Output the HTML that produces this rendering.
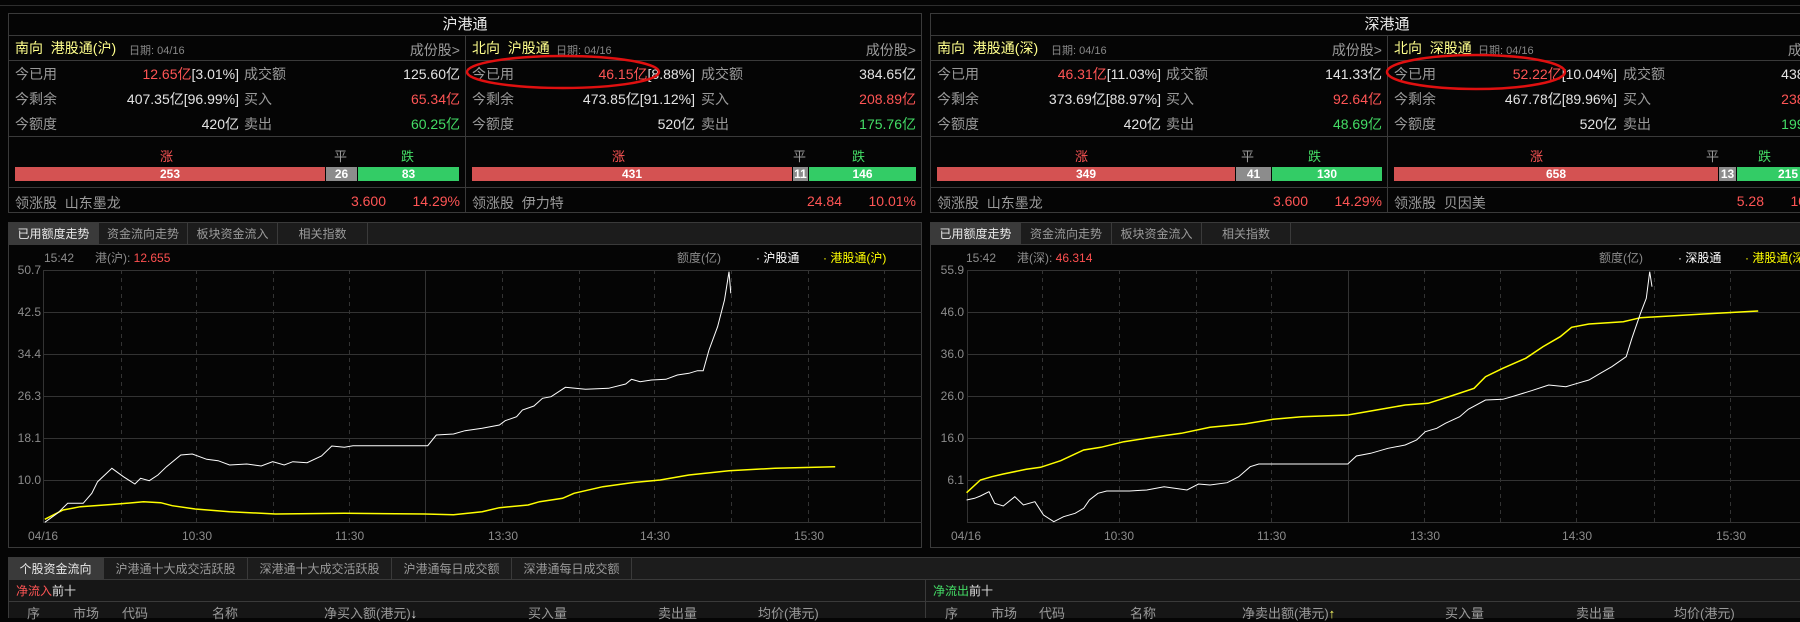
<!DOCTYPE html>
<html><head><meta charset="utf-8">
<style>
*{margin:0;padding:0;box-sizing:border-box}
body{width:1800px;height:618px;overflow:hidden;background:#050505;position:relative;font-family:"Liberation Sans","Noto Sans CJK SC",sans-serif;color:#a8a8a8;font-size:14px}
.a{position:absolute;white-space:nowrap}
.panel{position:absolute;top:13px;height:200px;width:914px;border:1px solid #3a3a3a}
.title{position:absolute;left:0;top:0;width:100%;height:22px;border-bottom:1px solid #3a3a3a;text-align:center;color:#e8e8e8;font-size:15px;line-height:22px}
.sub{position:absolute;top:22px;width:457px;height:177px}
.sub.r{border-left:1px solid #3a3a3a}
.hd{position:absolute;left:0;top:0;width:100%;height:25px;border-bottom:1px solid #3a3a3a}
.y{color:#ffff8c;font-size:14px;line-height:25px}
.dt{color:#888;font-size:11px}
.lb{color:#9a9a9a}
.w{color:#e4e4e4}
.rd{color:#ff5555}
.gr{color:#44dd66}
.line{position:absolute;left:0;width:100%;height:1px;background:#3a3a3a}
.bar{position:absolute;top:131px;height:14px;color:#fff;font-size:12px;font-weight:bold;text-align:center;line-height:14px}
.tabs{position:absolute;height:22px;background:#1c1c1c;border-bottom:1px solid #3a3a3a}
.tab{position:absolute;top:0;height:22px;line-height:22px;text-align:center;font-size:12px;color:#9a9a9a;border-right:1px solid #3a3a3a}
.tab.on{background:#3a3a3a;color:#e8e8e8}
</style></head><body>
<div class="a" style="left:0;top:5px;width:1800px;height:1px;background:#2e2e2e"></div>

<!-- LEFT PANEL 沪港通 -->
<div class="panel" style="left:8px">
 <div class="title">沪港通</div>
 <div class="sub" style="left:0">
  <div class="hd"><span class="a y" style="left:6px">南向&nbsp; 港股通(沪)</span><span class="a dt" style="left:120px;top:6px">日期: 04/16</span><span class="a lb" style="right:6px;top:4px">成份股&gt;</span></div>
  <span class="a lb" style="left:6px;top:28px">今已用</span><span class="a" style="right:227px;top:28px"><span class="rd">12.65亿</span><span class="w">[3.01%]</span></span><span class="a lb" style="left:235px;top:28px">成交额</span><span class="a w" style="right:6px;top:28px">125.60亿</span>
  <span class="a lb" style="left:6px;top:53px">今剩余</span><span class="a w" style="right:227px;top:53px">407.35亿[96.99%]</span><span class="a lb" style="left:235px;top:53px">买入</span><span class="a rd" style="right:6px;top:53px">65.34亿</span>
  <span class="a lb" style="left:6px;top:78px">今额度</span><span class="a w" style="right:227px;top:78px">420亿</span><span class="a lb" style="left:235px;top:78px">卖出</span><span class="a gr" style="right:6px;top:78px">60.25亿</span>
  <div class="line" style="top:100px"></div>
  <span class="a rd" style="left:151px;top:110px;font-size:13px">涨</span><span class="a lb" style="left:325px;top:110px;font-size:13px">平</span><span class="a gr" style="left:392px;top:110px;font-size:13px">跌</span>
  <div class="bar" style="left:6px;width:310px;background:#d45252">253</div>
  <div class="bar" style="left:317px;width:31px;background:#8c8c8c">26</div>
  <div class="bar" style="left:349px;width:101px;background:#33cc66">83</div>
  <div class="line" style="top:151px"></div>
  <span class="a lb" style="left:6px;top:157px">领涨股&nbsp; 山东墨龙</span><span class="a rd" style="right:80px;top:157px">3.600</span><span class="a rd" style="right:6px;top:157px">14.29%</span>
 </div>
 <div class="sub r" style="left:456px">
  <div class="hd"><span class="a y" style="left:6px">北向&nbsp; 沪股通</span><span class="a dt" style="left:90px;top:6px">日期: 04/16</span><span class="a lb" style="right:6px;top:4px">成份股&gt;</span></div>
  <span class="a lb" style="left:6px;top:28px">今已用</span><span class="a" style="right:227px;top:28px"><span class="rd">46.15亿</span><span class="w">[8.88%]</span></span><span class="a lb" style="left:235px;top:28px">成交额</span><span class="a w" style="right:6px;top:28px">384.65亿</span>
  <span class="a lb" style="left:6px;top:53px">今剩余</span><span class="a w" style="right:227px;top:53px">473.85亿[91.12%]</span><span class="a lb" style="left:235px;top:53px">买入</span><span class="a rd" style="right:6px;top:53px">208.89亿</span>
  <span class="a lb" style="left:6px;top:78px">今额度</span><span class="a w" style="right:227px;top:78px">520亿</span><span class="a lb" style="left:235px;top:78px">卖出</span><span class="a gr" style="right:6px;top:78px">175.76亿</span>
  <div class="line" style="top:100px"></div>
  <span class="a rd" style="left:146px;top:110px;font-size:13px">涨</span><span class="a lb" style="left:327px;top:110px;font-size:13px">平</span><span class="a gr" style="left:386px;top:110px;font-size:13px">跌</span>
  <div class="bar" style="left:6px;width:320px;background:#d45252">431</div>
  <div class="bar" style="left:327px;width:15px;background:#8c8c8c">11</div>
  <div class="bar" style="left:343px;width:107px;background:#33cc66">146</div>
  <div class="line" style="top:151px"></div>
  <span class="a lb" style="left:6px;top:157px">领涨股&nbsp; 伊力特</span><span class="a rd" style="right:80px;top:157px">24.84</span><span class="a rd" style="right:6px;top:157px">10.01%</span>
 </div>
</div>

<!-- RIGHT PANEL 深港通 -->
<div class="panel" style="left:930px">
 <div class="title">深港通</div>
 <div class="sub" style="left:0">
  <div class="hd"><span class="a y" style="left:6px">南向&nbsp; 港股通(深)</span><span class="a dt" style="left:120px;top:6px">日期: 04/16</span><span class="a lb" style="right:6px;top:4px">成份股&gt;</span></div>
  <span class="a lb" style="left:6px;top:28px">今已用</span><span class="a" style="right:227px;top:28px"><span class="rd">46.31亿</span><span class="w">[11.03%]</span></span><span class="a lb" style="left:235px;top:28px">成交额</span><span class="a w" style="right:6px;top:28px">141.33亿</span>
  <span class="a lb" style="left:6px;top:53px">今剩余</span><span class="a w" style="right:227px;top:53px">373.69亿[88.97%]</span><span class="a lb" style="left:235px;top:53px">买入</span><span class="a rd" style="right:6px;top:53px">92.64亿</span>
  <span class="a lb" style="left:6px;top:78px">今额度</span><span class="a w" style="right:227px;top:78px">420亿</span><span class="a lb" style="left:235px;top:78px">卖出</span><span class="a gr" style="right:6px;top:78px">48.69亿</span>
  <div class="line" style="top:100px"></div>
  <span class="a rd" style="left:144px;top:110px;font-size:13px">涨</span><span class="a lb" style="left:310px;top:110px;font-size:13px">平</span><span class="a gr" style="left:377px;top:110px;font-size:13px">跌</span>
  <div class="bar" style="left:6px;width:298px;background:#d45252">349</div>
  <div class="bar" style="left:305px;width:35px;background:#8c8c8c">41</div>
  <div class="bar" style="left:341px;width:110px;background:#33cc66">130</div>
  <div class="line" style="top:151px"></div>
  <span class="a lb" style="left:6px;top:157px">领涨股&nbsp; 山东墨龙</span><span class="a rd" style="right:80px;top:157px">3.600</span><span class="a rd" style="right:6px;top:157px">14.29%</span>
 </div>
 <div class="sub r" style="left:456px">
  <div class="hd"><span class="a y" style="left:6px">北向&nbsp; 深股通</span><span class="a dt" style="left:90px;top:6px">日期: 04/16</span><span class="a lb" style="right:6px;top:4px">成份股&gt;</span></div>
  <span class="a lb" style="left:6px;top:28px">今已用</span><span class="a" style="right:227px;top:28px"><span class="rd">52.22亿</span><span class="w">[10.04%]</span></span><span class="a lb" style="left:235px;top:28px">成交额</span><span class="a w" style="right:6px;top:28px">438.00亿</span>
  <span class="a lb" style="left:6px;top:53px">今剩余</span><span class="a w" style="right:227px;top:53px">467.78亿[89.96%]</span><span class="a lb" style="left:235px;top:53px">买入</span><span class="a rd" style="right:6px;top:53px">238.80亿</span>
  <span class="a lb" style="left:6px;top:78px">今额度</span><span class="a w" style="right:227px;top:78px">520亿</span><span class="a lb" style="left:235px;top:78px">卖出</span><span class="a gr" style="right:6px;top:78px">199.20亿</span>
  <div class="line" style="top:100px"></div>
  <span class="a rd" style="left:142px;top:110px;font-size:13px">涨</span><span class="a lb" style="left:318px;top:110px;font-size:13px">平</span><span class="a gr" style="left:370px;top:110px;font-size:13px">跌</span>
  <div class="bar" style="left:6px;width:324px;background:#d45252">658</div>
  <div class="bar" style="left:331px;width:17px;background:#8c8c8c">13</div>
  <div class="bar" style="left:349px;width:102px;background:#33cc66">215</div>
  <div class="line" style="top:151px"></div>
  <span class="a lb" style="left:6px;top:157px">领涨股&nbsp; 贝因美</span><span class="a rd" style="right:80px;top:157px">5.28</span><span class="a rd" style="right:6px;top:157px">10.01%</span>
 </div>
</div>

<!-- chart panels -->
<div class="a" style="left:8px;top:222px;width:914px;height:326px;border:1px solid #3a3a3a"></div>
<div class="a" style="left:930px;top:222px;width:914px;height:326px;border:1px solid #3a3a3a"></div>
<div class="tabs" style="left:9px;top:223px;width:912px">
 <div class="tab on" style="left:0;width:90px">已用额度走势</div><div class="tab" style="left:90px;width:89px">资金流向走势</div><div class="tab" style="left:179px;width:90px">板块资金流入</div><div class="tab" style="left:269px;width:90px">相关指数</div>
</div>
<div class="tabs" style="left:931px;top:223px;width:869px">
 <div class="tab on" style="left:0;width:90px">已用额度走势</div><div class="tab" style="left:90px;width:91px">资金流向走势</div><div class="tab" style="left:181px;width:90px">板块资金流入</div><div class="tab" style="left:271px;width:89px">相关指数</div>
</div>

<svg class="a" style="left:0;top:0" width="1800" height="618" xmlns="http://www.w3.org/2000/svg">
 <g stroke="#333" stroke-width="1" fill="none">
  <path d="M43 270.5H922M43 312.5H922M43 354.5H922M43 396.5H922M43 438.5H922M43 480.5H922M43 522.5H922"/>
  <path d="M967 270.5H1800M967 312.5H1800M967 354.5H1800M967 396.5H1800M967 438.5H1800M967 480.5H1800M967 522.5H1800"/>
  <path d="M43.5 270V523M425.5 270V523M967.5 270V523M1348.5 270V523"/>
  <path stroke-dasharray="4 4" d="M121.5 270V523M196.5 270V523M273.5 270V523M349.5 270V523M502.5 270V523M579.5 270V523M654.5 270V523M731.5 270V523M808.5 270V523M884.5 270V523"/>
  <path stroke-dasharray="4 4" d="M1042.5 270V523M1119.5 270V523M1196.5 270V523M1271.5 270V523M1424.5 270V523M1500.5 270V523M1576.5 270V523M1654.5 270V523M1730.5 270V523"/>
 </g>
 <polyline fill="none" stroke="#ffff00" stroke-width="1.5" points="44.8,519.3 63.1,510 80.4,506.7 114.8,504.3 143.5,501.7 160.7,502.7 172.2,505.7 195.2,509 229.6,511.7 275.5,514 344.4,513.3 424.8,514 453.5,514.7 482.2,511.7 499.4,507.7 528.1,505 539.6,501.7 562.6,498.3 574,493.3 602.8,486.7 631.5,482.7 660.2,480 688.9,475 729,470.7 775,468.3 835.2,466.7"/>
 <polyline fill="none" stroke="#ffffff" stroke-width="1" points="44.8,522.3 57.4,513.3 67.7,503.3 83.2,503.3 91.8,493.3 97.6,481.7 111.9,468.3 123.4,476.7 134.9,484 140.6,478.3 149.3,480.7 157.9,475 166.5,466.7 180.8,455 192.3,454 206.7,459.3 218.1,460.7 229.6,465 246.8,464 261.2,466 272.7,461.7 284.2,465 292.8,461.7 307.1,462.7 321.5,456 331.8,446 344.4,447.3 353,445.7 427.7,445.7 436.3,435 453.5,434 465,430.7 482.2,428.3 499.4,425 505.2,420.7 516.6,416.7 522.4,410 533.9,406 542.5,398.3 551.1,396.7 565.4,387.3 585.5,389.3 608.5,388.3 625.7,384 631.5,379.3 640.1,381.7 651.5,380 665.9,379.3 677.4,375 688.9,373.3 697.5,370.7 703.2,370.7 709,350 717.6,326.7 724.5,300 729,271.7 730.8,293.3"/>
 <polyline fill="none" stroke="#ffff00" stroke-width="1.5" points="966.6,492.7 980.4,480 991.8,476.7 1003.3,474 1026.3,469.3 1040.6,467.3 1060.7,460.7 1083.7,450 1100.9,447.3 1123.9,441.7 1152.6,437.3 1181.3,433.3 1210,427.3 1244.4,424 1273.1,419.3 1301.8,416.7 1347.8,415 1376.5,410 1405.2,405 1428.1,403.3 1451.1,396 1474.1,388.3 1485.5,376.7 1502.8,368.3 1525.7,358.3 1542.9,346.7 1560.2,336.7 1571.6,327.3 1588.9,324 1623.3,321.7 1640.5,317.7 1703.7,314 1758.2,311"/>
 <polyline fill="none" stroke="#ffffff" stroke-width="1" points="966.6,500 974.6,498.3 980.4,496 989,491.7 994.7,503.3 1003.3,506 1014.8,496.7 1023.4,505 1034.9,501.7 1043.5,515 1053.8,521.7 1063.6,516.7 1075.1,513.3 1083.7,508.3 1089.4,500 1098,493.3 1106.7,491 1129.6,491 1146.8,490 1164.1,486.7 1187,490 1198.5,484 1210,485 1227.2,482.7 1238.7,476.7 1250.2,466.7 1258.8,464 1347.8,464 1356.4,456 1370.7,453.3 1388,448.3 1405.2,445 1416.6,440 1425.3,431.7 1436.7,428.3 1445.4,423.3 1459.7,416.7 1468.3,409.3 1485.5,400 1502.8,399.3 1514.2,396 1531.5,390.7 1548.7,385 1565.9,386.7 1577.4,383.3 1588.9,380 1600.3,373.3 1611.8,366.7 1626.2,356.7 1631.9,338.3 1640.5,313.3 1646.3,298.3 1649.7,271.7 1652,286.7"/>
 <g font-family="Liberation Sans, Noto Sans CJK SC, sans-serif" font-size="12" fill="#8c8c8c">
  <g text-anchor="end"><text x="41" y="274">50.7</text><text x="41" y="316">42.5</text><text x="41" y="358">34.4</text><text x="41" y="400">26.3</text><text x="41" y="442">18.1</text><text x="41" y="484">10.0</text>
  <text x="964" y="274">55.9</text><text x="964" y="316">46.0</text><text x="964" y="358">36.0</text><text x="964" y="400">26.0</text><text x="964" y="442">16.0</text><text x="964" y="484">6.1</text></g>
  <text x="28" y="540">04/16</text><text x="182" y="540">10:30</text><text x="335" y="540">11:30</text><text x="488" y="540">13:30</text><text x="640" y="540">14:30</text><text x="794" y="540">15:30</text>
  <text x="951" y="540">04/16</text><text x="1104" y="540">10:30</text><text x="1257" y="540">11:30</text><text x="1410" y="540">13:30</text><text x="1562" y="540">14:30</text><text x="1716" y="540">15:30</text>
  <text x="44" y="262">15:42</text><text x="95" y="262">港(沪): <tspan fill="#ff5050">12.655</tspan></text>
  <text x="677" y="262">额度(亿)</text><text x="756" y="262" fill="#fff">· 沪股通</text><text x="823" y="262" fill="#ffff00">· 港股通(沪)</text>
  <text x="966" y="262">15:42</text><text x="1017" y="262">港(深): <tspan fill="#ff5050">46.314</tspan></text>
  <text x="1599" y="262">额度(亿)</text><text x="1678" y="262" fill="#fff">· 深股通</text><text x="1745" y="262" fill="#ffff00">· 港股通(深)</text>
 </g>
 <ellipse cx="563" cy="72" rx="96" ry="16" fill="none" stroke="#e01010" stroke-width="2.5"/>
 <ellipse cx="1476" cy="72" rx="89" ry="17" fill="none" stroke="#e01010" stroke-width="2.5"/>
</svg>

<!-- bottom -->
<div class="tabs" style="left:8px;top:557px;width:1792px;border-top:1px solid #3a3a3a;height:23px">
 <div class="tab on" style="left:0;width:96px">个股资金流向</div><div class="tab" style="left:96px;width:144px">沪港通十大成交活跃股</div><div class="tab" style="left:240px;width:144px">深港通十大成交活跃股</div><div class="tab" style="left:384px;width:120px">沪港通每日成交额</div><div class="tab" style="left:504px;width:120px">深港通每日成交额</div>
</div>
<div class="a" style="left:8px;top:580px;width:1792px;height:38px;background:#161616;border-left:1px solid #3a3a3a"></div>
<div class="a" style="left:8px;top:601px;width:1792px;height:1px;background:#3a3a3a"></div>
<div class="a" style="left:925px;top:580px;width:1px;height:38px;background:#3a3a3a"></div>
<div class="a" style="left:16px;top:582px;font-size:12px"><span class="rd">净流入</span><span class="w">前十</span></div>
<div class="a" style="left:933px;top:582px;font-size:12px"><span class="gr">净流出</span><span class="w">前十</span></div>
<div class="a lb" style="top:603px;left:0;width:1800px;font-size:13px">
 <span class="a" style="left:27px">序</span><span class="a" style="left:73px">市场</span><span class="a" style="left:122px">代码</span><span class="a" style="left:212px">名称</span><span class="a" style="left:324px">净买入额(港元)<span class="w">↓</span></span><span class="a" style="left:528px">买入量</span><span class="a" style="left:658px">卖出量</span><span class="a" style="left:758px">均价(港元)</span>
 <span class="a" style="left:945px">序</span><span class="a" style="left:991px">市场</span><span class="a" style="left:1039px">代码</span><span class="a" style="left:1130px">名称</span><span class="a" style="left:1242px">净卖出额(港元)<span style="color:#ffff66">↑</span></span><span class="a" style="left:1445px">买入量</span><span class="a" style="left:1576px">卖出量</span><span class="a" style="left:1674px">均价(港元)</span>
</div>
</body></html>
